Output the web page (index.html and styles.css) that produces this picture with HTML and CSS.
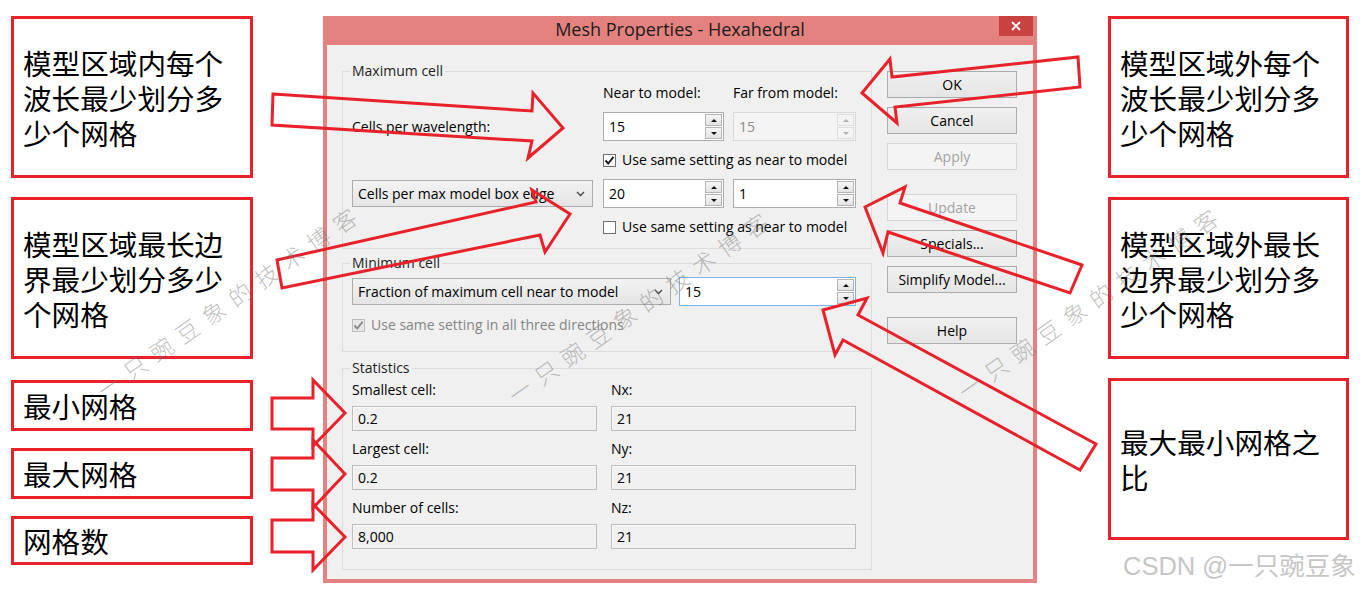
FILE: index.html
```html
<!DOCTYPE html>
<html lang="zh-CN">

<head>
    <meta charset="UTF-8">
    <title>Mesh Properties - Hexahedral</title>
    <link rel="stylesheet" href="styles.css">
</head>

<body>

    <div class="page">

        <!-- notes on the left -->
        <div class="notes notes-left">
            <div class="note tall">模型区域内每个波长最少划分多少个网格</div>
            <div class="note tall">模型区域最长边界最少划分多少个网格</div>
            <div class="note short">最小网格</div>
            <div class="note short">最大网格</div>
            <div class="note short last">网格数</div>
        </div>

        <!-- the dialog itself -->
        <div class="dialog">
            <div class="titlebar">
                <span class="title">Mesh Properties - Hexahedral</span>
                <span class="close">
                    <svg width="10" height="10" viewBox="0 0 10 10"><path d="M1 1 L9 9 M9 1 L1 9" stroke="#fff" stroke-width="1.8" /></svg>
                </span>
            </div>

            <div class="client">
                <div class="groups">

                    <fieldset class="group group-max">
                        <legend>Maximum cell</legend>
                        <div class="max-grid">
                            <span class="head col2">Near to model:</span>
                            <span class="head">Far from model:</span>

                            <span class="lbl">Cells per wavelength:</span>
                            <div class="spin"><span class="val">15</span><span class="spin-btns"><i class="up"></i><i class="down"></i></span></div>
                            <div class="spin disabled"><span class="val">15</span><span class="spin-btns"><i class="up"></i><i class="down"></i></span></div>

                            <div class="check col2 span2"><span class="box"><svg width="11" height="11" viewBox="0 0 11 11"><polyline points="1.5,5.5 4.2,8.5 9.5,1.8" fill="none" stroke="#1a1a1a" stroke-width="1.9" /></svg></span>Use same setting as near to model</div>

                            <div class="combo"><span>Cells per max model box edge</span><svg class="chev" width="9" height="6" viewBox="0 0 9 6"><polyline points="1,1 4.5,4.5 8,1" fill="none" stroke="#444" stroke-width="1.3" /></svg></div>
                            <div class="spin"><span class="val">20</span><span class="spin-btns"><i class="up"></i><i class="down"></i></span></div>
                            <div class="spin"><span class="val">1</span><span class="spin-btns"><i class="up"></i><i class="down"></i></span></div>

                            <div class="check col2 span2"><span class="box"></span>Use same setting as near to model</div>
                        </div>
                    </fieldset>

                    <fieldset class="group group-min">
                        <legend>Minimum cell</legend>
                        <div class="min-grid">
                            <div class="combo"><span>Fraction of maximum cell near to model</span><svg class="chev" width="9" height="6" viewBox="0 0 9 6"><polyline points="1,1 4.5,4.5 8,1" fill="none" stroke="#444" stroke-width="1.3" /></svg></div>
                            <div class="spin focused"><span class="val">15</span><span class="spin-btns"><i class="up"></i><i class="down"></i></span></div>
                            <div class="check disabled span2"><span class="box"><svg width="11" height="11" viewBox="0 0 11 11"><polyline points="1.5,5.5 4.2,8.5 9.5,1.8" fill="none" stroke="#8a8a8a" stroke-width="1.9" /></svg></span>Use same setting in all three directions</div>
                        </div>
                    </fieldset>

                    <fieldset class="group group-stats">
                        <legend>Statistics</legend>
                        <div class="stats-grid">
                            <div class="stat"><span>Smallest cell:</span><div class="field">0.2</div></div>
                            <div class="stat"><span>Nx:</span><div class="field">21</div></div>
                            <div class="stat"><span>Largest cell:</span><div class="field">0.2</div></div>
                            <div class="stat"><span>Ny:</span><div class="field">21</div></div>
                            <div class="stat"><span>Number of cells:</span><div class="field">8,000</div></div>
                            <div class="stat"><span>Nz:</span><div class="field">21</div></div>
                        </div>
                    </fieldset>

                </div>

                <div class="buttons">
                    <button class="btn">OK</button>
                    <button class="btn">Cancel</button>
                    <button class="btn" disabled>Apply</button>
                    <button class="btn spaced" disabled>Update</button>
                    <button class="btn">Specials...</button>
                    <button class="btn">Simplify Model...</button>
                    <button class="btn spaced">Help</button>
                </div>
            </div>
        </div>

        <!-- notes on the right -->
        <div class="notes notes-right">
            <div class="note tall">模型区域外每个波长最少划分多少个网格</div>
            <div class="note tall">模型区域外最长边界最少划分多少个网格</div>
            <div class="note tall">最大最小网格之比</div>
            <div class="csdn">CSDN @一只豌豆象</div>
        </div>

    </div>

    <!-- red callout arrows drawn over everything -->
    <svg class="arrows" width="1360" height="589" viewBox="0 0 1360 589">
        <polygon points="273,94 532,111 533,93 563,128 528,158 532,141 272,125" />
        <polygon points="277,260 536,202 532,190 570,214 545,252 540,235 282,288" />
        <polygon points="862,93 890,59 892,77 1078,57 1080,87 895,107 897,123" />
        <polygon points="865,207 905,187 900,203 1082,265 1070,293 888,232 883,253" />
        <polygon points="823,310 867,298 858,315 1096,444 1080,470 843,340 835,355" />
        <polygon points="272,398 313,398 313,380 345,413 313,446 313,429 272,429" />
        <polygon points="272,458 313,458 313,440 345,474 313,508 313,490 272,490" />
        <polygon points="272,520 313,520 313,504 345,537 313,570 313,552 272,552" />
    </svg>

    <!-- blog watermark -->
    <span class="wm wm-1">一只豌豆象的技术博客</span>
    <span class="wm wm-2">一只豌豆象的技术博客</span>
    <span class="wm wm-3">一只豌豆象的技术博客</span>

</body>

</html>
```

FILE: styles.css
```css
/* Page */
* {
    box-sizing: border-box;
}

html, body {
    margin: 0;
}

body {
    width: 1360px;
    height: 589px;
    overflow: hidden;
    position: relative;
    background: #ffffff;
    color: #000;
    font-family: "Open Sans", "Noto Sans", sans-serif;
}

.page {
    display: flex;
    align-items: flex-start;
    padding: 16px 0 0 11px;
}

/* Red note boxes */
.notes {
    display: flex;
    flex-direction: column;
    width: 242px;
}

.notes-left {
    margin-right: 70px;
}

.notes-right {
    margin-left: 71px;
    width: 241px;
}

.note {
    display: flex;
    align-items: center;
    border: 3px solid #e8212a;
    padding: 0 12px 0 9px;
    font-family: "Noto Sans CJK SC", sans-serif;
    font-size: 28.6px;
    line-height: 35px;
    color: #000;
}

.note.tall {
    height: 162px;
}

.note.short {
    height: 51px;
}

.note.last {
    height: 49px;
}

.note + .note {
    margin-top: 19px;
}

.note.tall + .note.short {
    margin-top: 21px;
}

.note.short + .note.short {
    margin-top: 17px;
}

.csdn {
    margin-top: 12px;
    padding-left: 15px;
    font-family: "Liberation Sans", "Noto Sans CJK SC", sans-serif;
    font-size: 25.5px;
    line-height: 28px;
    color: #c6c6c6;
    white-space: nowrap;
}

/* Dialog window */
.dialog {
    width: 714px;
    height: 567px;
    background: #e3827f;
    padding: 0 4px 4px;
    display: flex;
    flex-direction: column;
    font-size: 14px;
}

.titlebar {
    height: 29px;
    display: grid;
    grid-template-columns: 1fr auto 1fr;
    align-items: center;
}

.title {
    grid-column: 2;
    font-size: 18px;
    line-height: 24px;
    margin-bottom: 3px;
    color: #1c1c1c;
}

.close {
    grid-column: 3;
    justify-self: end;
    align-self: start;
    width: 34px;
    height: 20px;
    background: #c8423f;
    display: flex;
    align-items: center;
    justify-content: center;
}

.client {
    flex: 1;
    background: #f0f0f0;
    display: flex;
    gap: 15px;
    padding: 18px 16px 0 15px;
}

.groups {
    width: 530px;
    display: flex;
    flex-direction: column;
}

/* Group boxes */
.group {
    margin: 0;
    min-width: 0;
    border: 1px solid #dcdcdc;
    padding: 6px 15px 13px 9px;
}

.group legend {
    padding: 0 2px;
    margin-left: -2px;
    line-height: 16px;
    color: #1e1e1e;
}

.group-min {
    margin-top: 6px;
    padding-bottom: 18px;
}

.group-stats {
    margin-top: 8px;
    padding-top: 6px;
    padding-bottom: 20px;
}

.max-grid {
    display: grid;
    grid-template-columns: 242px 121px 123px;
    grid-template-rows: 16px 29px 16px 29px 16px;
    column-gap: 9px;
    row-gap: 11px;
    align-items: center;
}

.min-grid {
    display: grid;
    grid-template-columns: 319px 177px;
    grid-template-rows: 29px 16px;
    column-gap: 8px;
    row-gap: 11px;
    align-items: center;
}

.col2 {
    grid-column-start: 2;
}

.span2 {
    grid-column-end: span 2;
}

.min-grid .span2 {
    grid-column: 1 / span 2;
}

.head,
.lbl {
    line-height: 16px;
    white-space: nowrap;
}

/* Spin edit */
.spin {
    height: 29px;
    display: flex;
    background: #fff;
    border: 1px solid #abadb3;
}

.spin .val {
    flex: 1;
    padding-left: 5px;
    line-height: 27px;
}

.spin-btns {
    width: 17px;
    display: flex;
    flex-direction: column;
    gap: 1px;
    margin: 1px 1px 1px 0;
}

.spin-btns i {
    flex: 1;
    display: flex;
    align-items: center;
    justify-content: center;
    border: 1px solid #b5b5b5;
    background: linear-gradient(#f6f6f6, #e3e3e3);
}

.spin-btns i::before {
    content: "";
    border-left: 3px solid transparent;
    border-right: 3px solid transparent;
}

.spin-btns .up::before {
    border-bottom: 3px solid #111;
}

.spin-btns .down::before {
    border-top: 3px solid #111;
}

.spin.disabled {
    background: #f4f4f4;
    border-color: #d9d9d9;
    color: #8c8c8c;
}

.spin.disabled .spin-btns i {
    border-color: #dedede;
    background: #f4f4f4;
}

.spin.disabled .up::before {
    border-bottom-color: #b0b0b0;
}

.spin.disabled .down::before {
    border-top-color: #b0b0b0;
}

.spin.focused {
    border-color: #7eb4ea;
}

/* Combo box */
.combo {
    height: 27px;
    display: flex;
    align-items: center;
    justify-content: space-between;
    padding: 0 7px 0 5px;
    border: 1px solid #acacac;
    background: linear-gradient(#f2f2f2, #e5e5e5);
    white-space: nowrap;
}

.max-grid .combo {
    width: 241px;
}

/* Check boxes */
.check {
    display: flex;
    align-items: center;
    gap: 6px;
    line-height: 16px;
    white-space: nowrap;
}

.check .box {
    width: 13px;
    height: 13px;
    border: 1px solid #707070;
    background: #fff;
    display: flex;
    align-items: center;
    justify-content: center;
}

.check.disabled {
    color: #858585;
}

.check.disabled .box {
    border-color: #bcbcbc;
    background: #e6e6e6;
}

/* Statistics */
.stats-grid {
    display: grid;
    grid-template-columns: 245px 245px;
    column-gap: 14px;
    row-gap: 10px;
}

.stat {
    display: flex;
    flex-direction: column;
    gap: 8px;
}

.stat span {
    line-height: 16px;
}

.field {
    height: 25px;
    line-height: 23px;
    padding-left: 5px;
    background: #f0f0f0;
    border: 1px solid #bdbdbd;
    box-shadow: inset 1px 1px 0 #fafafa;
}

/* Buttons */
.buttons {
    width: 130px;
    display: flex;
    flex-direction: column;
    gap: 9px;
    padding-top: 8px;
}

.btn {
    height: 27px;
    padding: 0;
    font-family: inherit;
    font-size: 14px;
    color: #000;
    border: 1px solid #acacac;
    background: linear-gradient(#f0f0f0, #e5e5e5);
}

.btn:disabled {
    color: #a3a3a3;
    border-color: #d5d5d5;
    background: #f4f4f4;
}

.btn.spaced {
    margin-top: 15px;
}

/* Overlays */
.arrows {
    position: absolute;
    left: 0;
    top: 0;
    pointer-events: none;
}

.arrows polygon {
    fill: none;
    stroke: #e8212a;
    stroke-width: 3;
}

.wm {
    position: absolute;
    transform: translate(-50%, -50%) rotate(-35deg);
    font-family: "Noto Sans CJK SC", sans-serif;
    font-weight: 300;
    font-size: 23px;
    letter-spacing: 9px;
    color: rgba(110, 110, 110, 0.45);
    white-space: nowrap;
    pointer-events: none;
}

.wm-1 {
    left: 230px;
    top: 300px;
}

.wm-2 {
    left: 641px;
    top: 305px;
}

.wm-3 {
    left: 1091px;
    top: 301px;
}
```
